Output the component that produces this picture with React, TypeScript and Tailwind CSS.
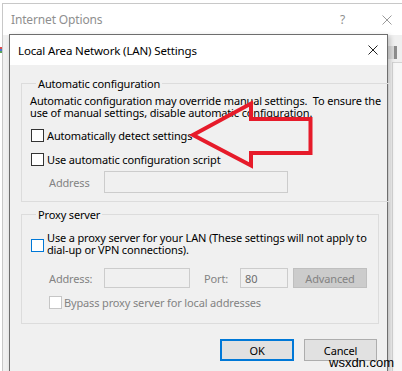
import React from "react";

type BoxState = "on" | "focus" | "off";

function CheckBox({ state = "on" }: { state?: BoxState }) {
  const border =
    state === "focus"
      ? "border-[#0078d7]"
      : state === "off"
        ? "border-[#c6c6c6]"
        : "border-[#333333]";
  return <span className={`block h-[13px] w-[13px] shrink-0 border bg-white ${border}`} />;
}

function CloseGlyph({ className = "" }: { className?: string }) {
  return (
    <svg width="10" height="10" viewBox="0 0 10 10" className={className}>
      <path d="M0.5 0.5 L9.5 9.5 M9.5 0.5 L0.5 9.5" stroke="currentColor" strokeWidth="1" fill="none" />
    </svg>
  );
}

const grey = "text-[#838383]";

export default function App() {
  return (
    <div className="relative h-[371px] w-[402px] overflow-hidden whitespace-nowrap bg-white font-['Noto_Sans',sans-serif] text-[11px] tracking-[-0.15px] text-black">
      {/* bits of the desktop showing at the far left */}
      <div className="absolute left-0 top-[47px] flex w-[2px] flex-col">
        <span className="h-[2px] bg-[#d94b4b]" />
        <span className="h-[2px] bg-[#4a7bd0]" />
        <span className="h-[2px] bg-[#5aa35a]" />
      </div>

      {/* Internet Options, the parent window */}
      <div className="absolute left-[2px] top-[3px] h-[380px] w-[400px] border-l border-t border-[#c8c8c8] bg-[#f0f0f0]">
        <div className="flex h-[31px] items-center bg-white pl-[8px] pr-[10px] text-[12px] text-[#8f8f8f]">
          <span className="leading-[13px]">Internet Options</span>
          <span className="ml-auto leading-[13px]">?</span>
          <CloseGlyph className="ml-[37px] text-[#9a9a9a]" />
        </div>
        <div className="flex flex-col items-end pr-[5px] pt-[11px]">
          <div className="h-[13px] w-[9px] border-r-[3px] border-[#8c8c8c] bg-[#dadada]" />
          <div className="mr-[-5px] mt-[3px] h-[320px] w-[10px] border-l border-t border-[#d4d4d4] bg-[#f7f7f7]" />
        </div>
      </div>

      {/* LAN Settings dialog */}
      <div className="absolute left-[9px] top-[34px] h-[360px] w-[379px] border border-[#6e6e6e] bg-[#f0f0f0] shadow-[2px_2px_5px_rgba(0,0,0,0.22)]">
        <div className="flex h-[30px] items-center justify-between bg-white pl-[8px] pr-[9px]">
          <span className="text-[11.5px] leading-[13px]">Local Area Network (LAN) Settings</span>
          <CloseGlyph className="text-[#222]" />
        </div>

        <div className="pl-[11px] pr-[8px] pt-[12px]">
          <fieldset className="border border-[#dcdcdc] pb-[8px] pl-[8px] pr-[8px] pt-[5px]">
            <legend className="ml-[6px] px-[2px] leading-[13px]">Automatic configuration</legend>
            <p className="leading-[12px]">
              Automatic configuration may override manual settings.&nbsp; To ensure the
              <br />
              use of manual settings, disable automatic configuration.
            </p>
            <label className="ml-[1px] mt-[10px] flex items-center gap-[3px]">
              <CheckBox />
              <span className="leading-[13px]">Automatically detect settings</span>
            </label>
            <label className="ml-[1px] mt-[11px] flex items-center gap-[3px]">
              <CheckBox />
              <span className="leading-[13px]">Use automatic configuration script</span>
            </label>
            <div className="mt-[5px] flex items-center pl-[19px]">
              <span className={`w-[55px] leading-[13px] ${grey}`}>Address</span>
              <span className="block h-[22px] w-[184px] border border-[#cccccc] bg-[#f0f0f0]" />
            </div>
          </fieldset>

          <fieldset className="mt-[6px] border border-[#dcdcdc] pb-[14px] pl-[8px] pr-[8px] pt-[11px]">
            <legend className="ml-[6px] px-[2px] leading-[13px]">Proxy server</legend>
            <label className="ml-[1px] flex items-center gap-[3px]">
              <span className="mt-[2px]">
                <CheckBox state="focus" />
              </span>
              <span className="leading-[12px]">
                Use a proxy server for your LAN (These settings will not apply to
                <br />
                dial-up or VPN connections).
              </span>
            </label>
            <div className={`mt-[12px] flex items-center pl-[19px] ${grey}`}>
              <span className="w-[55px] leading-[13px]">Address:</span>
              <span className="block h-[20px] w-[86px] border border-[#cccccc] bg-[#f0f0f0]" />
              <span className="ml-[14px] w-[36px] leading-[13px]">Port:</span>
              <span className="flex h-[20px] w-[48px] items-center border border-[#cccccc] bg-[#f0f0f0] pl-[4px] leading-[13px] text-[#6d6d6d]">
                80
              </span>
              <span className="ml-[5px] flex h-[20px] w-[74px] items-center justify-center border border-[#bfbfbf] bg-[#cccccc] leading-[13px]">
                Advanced
              </span>
            </div>
            <label className="mt-[8px] flex items-center gap-[2px] pl-[19px]">
              <CheckBox state="off" />
              <span className={`leading-[13px] ${grey}`}>Bypass proxy server for local addresses</span>
            </label>
          </fieldset>

          <div className="mt-[15px] flex justify-end gap-[10px] pr-[2px]">
            <button className="flex h-[22px] w-[74px] items-center justify-center border-2 border-[#0078d7] bg-[#e1e1e1] leading-[13px]">
              OK
            </button>
            <button className="flex h-[22px] w-[73px] items-center justify-center border border-[#adadad] bg-[#e1e1e1] leading-[13px]">
              Cancel
            </button>
          </div>
        </div>
      </div>

      {/* red arrow drawn over the dialog */}
      <svg className="pointer-events-none absolute left-0 top-0" width="402" height="371" viewBox="0 0 402 371">
        <path
          d="M193 135 L251 103.5 L251 119 L310.5 119 L310.5 153 L251 153 L251 165.5 Z"
          fill="none"
          stroke="#e61b2a"
          strokeWidth="4"
          strokeLinejoin="miter"
          strokeMiterlimit="10"
        />
      </svg>

      {/* site watermark */}
      <span className="pointer-events-none absolute left-[329px] top-[355px] font-['Liberation_Sans',sans-serif] text-[13px] leading-[15px] tracking-normal text-black">
        wsxdn.com
      </span>
    </div>
  );
}
